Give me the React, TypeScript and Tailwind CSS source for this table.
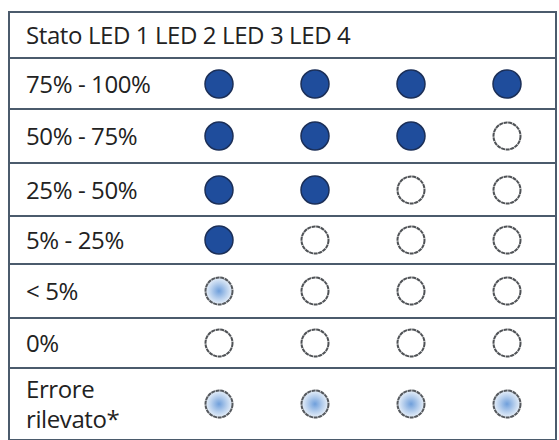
import React from "react";

type Led = "on" | "off" | "blink";

interface Row {
  label: React.ReactNode;
  leds: Led[];
  height: string;
}

const rows: Row[] = [
  { label: "75% - 100%", leds: ["on", "on", "on", "on"], height: "h-[51px]" },
  { label: "50% - 75%", leds: ["on", "on", "on", "off"], height: "h-[54px]" },
  { label: "25% - 50%", leds: ["on", "on", "off", "off"], height: "h-[53px]" },
  { label: "5% - 25%", leds: ["on", "off", "off", "off"], height: "h-[48px]" },
  { label: "< 5%", leds: ["blink", "off", "off", "off"], height: "h-[54px]" },
  { label: "0%", leds: ["off", "off", "off", "off"], height: "h-[50px]" },
  {
    label: (
      <>
        Errore
        <br />
        rilevato*
      </>
    ),
    leds: ["blink", "blink", "blink", "blink"],
    height: "h-[70px]",
  },
];

function LedDot({ state }: { state: Led }) {
  if (state === "on") {
    return (
      <svg width="32" height="32" viewBox="0 0 32 32">
        <circle cx="16" cy="16" r="14" fill="#1f4d9c" stroke="#1b2f58" strokeWidth="1.5" />
      </svg>
    );
  }
  if (state === "blink") {
    return (
      <svg width="32" height="32" viewBox="0 0 32 32">
        <defs>
          <radialGradient id="glow" cx="50%" cy="50%" r="50%">
            <stop offset="0%" stopColor="#6f9fdb" />
            <stop offset="55%" stopColor="#b4cdec" />
            <stop offset="100%" stopColor="#e8f0f9" />
          </radialGradient>
        </defs>
        <circle cx="16" cy="16" r="13.5" fill="url(#glow)" stroke="#55595e" strokeWidth="2" strokeDasharray="4 0.6" />
      </svg>
    );
  }
  return (
    <svg width="32" height="32" viewBox="0 0 32 32">
      <circle cx="16" cy="16" r="13.5" fill="#ffffff" stroke="#4f5256" strokeWidth="2" strokeDasharray="4 0.6" />
    </svg>
  );
}

export default function App() {
  return (
    <div className="w-[559px] h-[440px] bg-white pt-[11px] pl-[8px] font-['Open_Sans',sans-serif] text-[#222] text-[24px] tracking-[-0.4px] leading-[30px]">
      <div className="w-[549px] border-2 border-[#4b5b6c]">
        <div className="h-[46px] flex items-center pl-[16px] border-b-2 border-[#4b5b6c]">
          Stato LED 1 LED 2 LED 3 LED 4
        </div>
        {rows.map((row, i) => (
          <div
            key={i}
            className={`flex items-center ${row.height} ${i < rows.length - 1 ? "border-b-2 border-[#4b5b6c]" : ""}`}
          >
            <div className="w-[161px] pl-[16px]">{row.label}</div>
            {row.leds.map((led, j) => (
              <div key={j} className="w-[96px] flex justify-center">
                <LedDot state={led} />
              </div>
            ))}
          </div>
        ))}
      </div>
    </div>
  );
}
